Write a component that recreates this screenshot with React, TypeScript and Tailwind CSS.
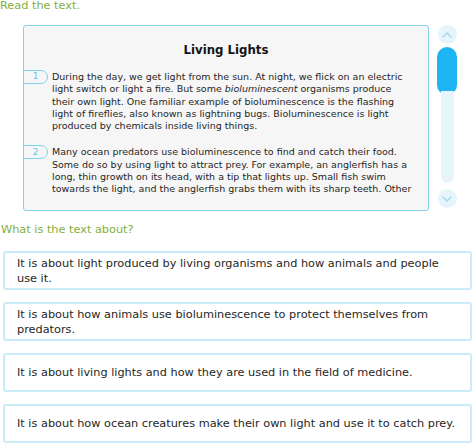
import React from "react";

const paragraphs: React.ReactNode[][] = [
  [
    "During the day, we get light from the sun. At night, we flick on an electric",
    <>
      light switch or light a fire. But some <i>bioluminescent</i> organisms produce
    </>,
    "their own light. One familiar example of bioluminescence is the flashing",
    "light of fireflies, also known as lightning bugs. Bioluminescence is light",
    "produced by chemicals inside living things.",
  ],
  [
    "Many ocean predators use bioluminescence to find and catch their food.",
    "Some do so by using light to attract prey. For example, an anglerfish has a",
    "long, thin growth on its head, with a tip that lights up. Small fish swim",
    "towards the light, and the anglerfish grabs them with its sharp teeth. Other",
  ],
];

const answers: string[][] = [
  ["It is about light produced by living organisms and how animals and people", "use it."],
  ["It is about how animals use bioluminescence to protect themselves from", "predators."],
  ["It is about living lights and how they are used in the field of medicine."],
  ["It is about how ocean creatures make their own light and use it to catch prey."],
];

function Chevron({ up }: { up?: boolean }) {
  return (
    <svg width="10" height="6" viewBox="0 0 10 6" fill="none">
      <polyline
        points={up ? "1,5 5,1 9,5" : "1,1 5,5 9,1"}
        stroke="#9ed6ee"
        strokeWidth="1.2"
        strokeLinecap="round"
        strokeLinejoin="round"
      />
    </svg>
  );
}

export default function App() {
  return (
    <div className="w-[474px] h-[443px] overflow-hidden bg-white font-['DejaVu_Sans',sans-serif]">
      <p className="-mt-[2px] text-[11.3px] leading-[15px] text-[#84ae3e]">Read the text.</p>

      <div className="mt-[12px] flex">
        {/* passage panel */}
        <div className="ml-[23px] w-[406px] h-[186px] rounded-[3px] border border-[#80d2ee] bg-[#f6f6f6]">
          <div className="h-[172px] overflow-hidden pt-[17px]">
            <h2 className="text-center text-[11.75px] leading-[15px] font-bold text-[#151515]">Living Lights</h2>
            <div className="mt-[13px] flex flex-col gap-[14px]">
              {paragraphs.map((lines, i) => (
                <div key={i} className="relative pl-[28px]">
                  <span className="absolute -left-px -top-[1px] flex h-[14px] w-[25px] items-center justify-center rounded-r-full border border-[#80d2ee] text-[9px] text-[#5fc4ee]">
                    {i + 1}
                  </span>
                  <div className="text-[9.5px] leading-[12.3px] text-[#262626] whitespace-nowrap">
                    {lines.map((l, j) => (
                      <div key={j}>{l}</div>
                    ))}
                  </div>
                </div>
              ))}
            </div>
          </div>
        </div>

        {/* scroll controls */}
        <div className="ml-[8px] flex w-[20px] flex-col items-center">
          <div className="flex h-[19px] w-[19px] items-center justify-center rounded-full bg-[#e6f5fb]">
            <Chevron up />
          </div>
          <div className="mt-[3px] flex h-[136px] w-[20px] flex-col items-center">
            <div className="h-[48px] w-[20px] rounded-full bg-[#1db5f1]" />
            <div className="-mt-[4px] w-[13px] flex-1 rounded-b-full bg-[#e6f5fb]" />
          </div>
          <div className="mt-[6px] flex h-[19px] w-[19px] items-center justify-center rounded-full bg-[#e6f5fb]">
            <Chevron />
          </div>
        </div>
      </div>

      <p className="mt-[11px] pl-[1px] text-[11.3px] leading-[15px] text-[#84ae3e]">What is the text about?</p>

      <div className="mt-[14px] ml-[3px] flex w-[469px] flex-col gap-[12px]">
        {answers.map((lines, i) => (
          <div
            key={i}
            className="flex h-[39px] items-center rounded-[3px] border-2 border-[#c9ecf8] bg-white pl-[12px] text-[11.3px] leading-[15px] text-[#262626] whitespace-nowrap"
          >
            <div>
              {lines.map((l, j) => (
                <div key={j}>{l}</div>
              ))}
            </div>
          </div>
        ))}
      </div>
    </div>
  );
}
